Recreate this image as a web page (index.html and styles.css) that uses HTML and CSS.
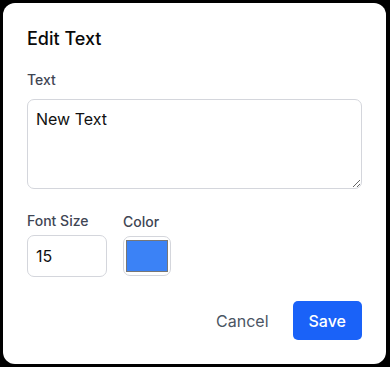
FILE: index.html
```html
<!DOCTYPE html>
<html lang="en">
<head>
    <meta charset="UTF-8">
    <meta name="viewport" content="width=device-width, initial-scale=1.0">
    <title>Edit Text</title>
    <link rel="stylesheet" href="styles.css">
</head>
<body>
    <div class="dialog">
        <h2 class="dialog-title">Edit Text</h2>

        <label class="field">
            <span class="field-label">Text</span>
            <textarea class="text-input">New Text</textarea>
        </label>

        <div class="field-row">
            <label class="field">
                <span class="field-label">Font Size</span>
                <input class="size-input" type="text" value="15">
            </label>
            <div class="field">
                <span class="field-label">Color</span>
                <div class="color-picker">
                    <span class="color-swatch"></span>
                </div>
            </div>
        </div>

        <div class="actions">
            <button class="btn btn-cancel">Cancel</button>
            <button class="btn btn-save">Save</button>
        </div>
    </div>
</body>
</html>
```

FILE: styles.css
```css
html, body {
    margin: 0;
    padding: 0;
    background-color: #000;
}
body {
    font-family: Inter, "Noto Sans", sans-serif;
    color: #111;
    padding: 3px 4px 3px 3px;
}
.dialog {
    background-color: #fff;
    border-radius: 12px;
    padding: 24px;
    height: 313px;
    display: flex;
    flex-direction: column;
}
.dialog-title {
    margin: 0 0 19px;
    font-size: 18px;
    line-height: 24px;
    font-weight: 500;
    color: #0a0a0a;
}
.field {
    display: flex;
    flex-direction: column;
}
.field-label {
    font-size: 14px;
    line-height: 20px;
    font-weight: 500;
    color: #3f4654;
    margin-bottom: 9px;
}
.text-input {
    font-family: inherit;
    font-size: 16px;
    color: #111;
    height: 90px;
    padding: 9px 8px;
    border: 1px solid #d4d6dc;
    border-radius: 7px;
    box-sizing: border-box;
    resize: vertical;
    margin: 0;
}
.field-row {
    display: flex;
    align-items: center;
    gap: 16px;
    margin-top: 22px;
}
.field-row .field-label {
    margin-bottom: 4px;
}
.size-input {
    font-family: inherit;
    font-size: 16px;
    color: #111;
    width: 80px;
    height: 42px;
    padding: 0 8px;
    border: 1px solid #d4d6dc;
    border-radius: 7px;
    box-sizing: border-box;
    margin: 0;
}
.color-picker {
    width: 48px;
    height: 40px;
    border: 1px solid #d4d6dc;
    border-radius: 7px;
    box-sizing: border-box;
    padding: 3px 2px 3px;
    display: flex;
}
.color-swatch {
    flex: 1;
    background-color: #3b82f6;
    border: 1px solid #777;
}
.actions {
    display: flex;
    justify-content: flex-end;
    gap: 8px;
    margin-top: auto;
}
.btn {
    font-family: inherit;
    font-size: 16px;
    font-weight: 500;
    height: 39px;
    padding: 0 16px;
    border: none;
    border-radius: 5px;
    cursor: pointer;
}
.btn-cancel {
    background: none;
    color: #4b5563;
    font-weight: 400;
}
.btn-save {
    background-color: #1a62f8;
    color: #fff;
}
```
